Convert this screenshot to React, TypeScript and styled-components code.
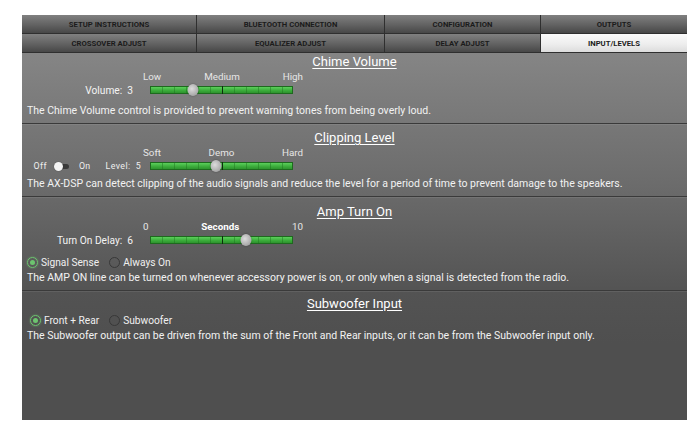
import styled, { createGlobalStyle } from "styled-components";

const GlobalStyle = createGlobalStyle`
  html, body {
    margin: 0;
    background: #ffffff;
  }
  body {
    font-family: Roboto, "Noto Sans", Arial, sans-serif;
  }
`;

const tabs = [
  ["SETUP INSTRUCTIONS", "BLUETOOTH CONNECTION", "CONFIGURATION", "OUTPUTS"],
  ["CROSSOVER ADJUST", "EQUALIZER ADJUST", "DELAY ADJUST", "INPUT/LEVELS"],
];

type SliderProps = {
  labels: string[];
  value: number;
  boldMiddle?: boolean;
};

function Slider({ labels, value, boldMiddle }: SliderProps) {
  return (
    <SliderGroup>
      <Scale>
        {labels.map((l, i) => (
          <ScaleLabel key={l} $bold={boldMiddle && i === 1}>
            {l}
          </ScaleLabel>
        ))}
      </Scale>
      <TrackWrap>
        <Track />
        <Thumb style={{ left: `${value}%` }} />
      </TrackWrap>
    </SliderGroup>
  );
}

function Radio({ label, checked }: { label: string; checked?: boolean }) {
  return (
    <RadioItem>
      <RadioDot $checked={checked} />
      {label}
    </RadioItem>
  );
}

export default function App() {
  return (
    <Page>
      <GlobalStyle />
      <Panel>
        <TabGrid>
          {tabs.flat().map((t) => (
            <Tab key={t} $active={t === "INPUT/LEVELS"}>
              {t}
            </Tab>
          ))}
        </TabGrid>

        <Content>
          <Section $top={2}>
            <Title>Chime Volume</Title>
            <ControlRow>
              <LeftCell $pad={10}>
                <Label>Volume:&nbsp; 3</Label>
              </LeftCell>
              <Slider labels={["Low", "Medium", "High"]} value={30} />
            </ControlRow>
            <Description $gap={8}>
              The Chime Volume control is provided to prevent warning tones from being overly loud.
            </Description>
          </Section>

          <Section $top={7}>
            <Title>Clipping Level</Title>
            <ControlRow>
              <LeftCell $pad={2}>
                <SmallLabel>Off</SmallLabel>
                <Switch />
                <SmallLabel>On</SmallLabel>
                <SmallLabel $wide>Level:&nbsp; 5</SmallLabel>
              </LeftCell>
              <Slider labels={["Soft", "Demo", "Hard"]} value={46} />
            </ControlRow>
            <Description $gap={5}>
              The AX-DSP can detect clipping of the audio signals and reduce the level for a period of time to prevent damage to the speakers.
            </Description>
          </Section>

          <Section $top={8}>
            <Title>Amp Turn On</Title>
            <ControlRow>
              <LeftCell $pad={10}>
                <Label>Turn On Delay:&nbsp; 6</Label>
              </LeftCell>
              <Slider labels={["0", "Seconds", "10"]} value={67} boldMiddle />
            </ControlRow>
            <RadioRow $gap={8}>
              <Radio label="Signal Sense" checked />
              <Radio label="Always On" />
            </RadioRow>
            <Description $gap={3}>
              The AMP ON line can be turned on whenever accessory power is on, or only when a signal is detected from the radio.
            </Description>
          </Section>

          <Section $top={6} $last>
            <Title>Subwoofer Input</Title>
            <RadioRow $gap={2} $indent={3}>
              <Radio label="Front + Rear" checked />
              <Radio label="Subwoofer" />
            </RadioRow>
            <Description $gap={3}>
              The Subwoofer output can be driven from the sum of the Front and Rear inputs, or it can be from the Subwoofer input only.
            </Description>
          </Section>
        </Content>
      </Panel>
    </Page>
  );
}

const Page = styled.div`
  padding: 15px 0 0 22px;
`;

const Panel = styled.div`
  width: 665px;
  height: 405px;
  display: flex;
  flex-direction: column;
  background: #4f4f4f;
`;

const TabGrid = styled.div`
  display: grid;
  grid-template-columns: 174px 187px 155px 1fr;
  grid-auto-rows: 18px;
  gap: 1px;
  background: #2f2f2f;
  border-bottom: 1px solid #2f2f2f;
`;

const Tab = styled.div<{ $active?: boolean }>`
  display: flex;
  align-items: center;
  justify-content: center;
  font-size: 7.7px;
  font-weight: 700;
  color: #1b1b1b;
  background: ${(p) =>
    p.$active
      ? "linear-gradient(#fbfbfb, #ececec 60%, #dcdcdc)"
      : "linear-gradient(#808080, #626262 55%, #474747)"};
`;

const Content = styled.div`
  flex: 1;
  background: linear-gradient(#858585 0, #6c6c6c 130px, #535353 240px, #4f4f4f 290px);
`;

const Section = styled.div<{ $top: number; $last?: boolean }>`
  padding: ${(p) => p.$top}px 0 6px 5px;
  display: flex;
  flex-direction: column;
  color: #f2f2f2;
  border-bottom: ${(p) => (p.$last ? "none" : "1px solid #3a3a3a")};
  box-shadow: ${(p) => (p.$last ? "none" : "0 1px 0 rgba(255,255,255,0.08)")};
`;

const Title = styled.div`
  align-self: center;
  margin-left: -5px;
  font-size: 13px;
  line-height: 14px;
  text-decoration: underline;
  text-underline-offset: 2px;
  color: #ffffff;
`;

const ControlRow = styled.div`
  display: grid;
  grid-template-columns: 116px 160px;
  align-items: end;
  margin-top: 2px;
`;

const LeftCell = styled.div<{ $pad: number }>`
  display: flex;
  align-items: center;
  justify-content: flex-end;
  height: 14px;
  padding-right: ${(p) => p.$pad}px;
`;

const Label = styled.span`
  font-size: 10.2px;
  color: #f4f4f4;
`;

const SmallLabel = styled.span<{ $wide?: boolean }>`
  font-size: 8.8px;
  letter-spacing: 0.4px;
  color: #eeeeee;
  margin-left: ${(p) => (p.$wide ? "15px" : "0")};
`;

const Switch = styled.span`
  position: relative;
  width: 15px;
  height: 9px;
  margin: 0 10px 0 7px;

  &::before {
    content: "";
    position: absolute;
    left: 3px;
    right: 0;
    top: 2px;
    height: 5px;
    border-radius: 3px;
    background: #3a3a3a;
  }

  &::after {
    content: "";
    position: absolute;
    left: 0;
    top: 0;
    width: 9px;
    height: 9px;
    border-radius: 50%;
    background: #f4f4f4;
    box-shadow: 0 0 1px rgba(0, 0, 0, 0.5);
  }
`;

const SliderGroup = styled.div`
  display: flex;
  flex-direction: column;
`;

const Scale = styled.div`
  display: flex;
  justify-content: space-between;
  height: 12px;
  line-height: 12px;
`;

const ScaleLabel = styled.span<{ $bold?: boolean }>`
  font-size: 9.8px;
  font-weight: ${(p) => (p.$bold ? 700 : 400)};
  color: ${(p) => (p.$bold ? "#ffffff" : "#e6e6e6")};
`;

const TrackWrap = styled.div`
  position: relative;
  height: 14px;
  margin: 0 10px 0 7px;
  display: flex;
  align-items: center;
`;

const Track = styled.div`
  position: relative;
  flex: 1;
  height: 6px;
  border: 1px solid #1d6a1d;
  background:
    repeating-linear-gradient(90deg, transparent 0 11px, rgba(30, 110, 30, 0.45) 11px 12px),
    linear-gradient(#5ccf5c, #3aab3a 60%, #2e932e);

  &::after {
    content: "";
    position: absolute;
    left: 50%;
    top: -1px;
    bottom: -1px;
    width: 1px;
    background: #0d2d0d;
  }
`;

const Thumb = styled.span`
  position: absolute;
  top: 50%;
  width: 11px;
  height: 12px;
  border-radius: 50%;
  transform: translate(-50%, -50%);
  background: radial-gradient(circle at 40% 40%, #dcdcdc, #a8a8a8 70%, #8a8a8a);
  box-shadow: 0 0 2px rgba(0, 0, 0, 0.35);
`;

const RadioRow = styled.div<{ $gap: number; $indent?: number }>`
  display: flex;
  gap: 10px;
  height: 14px;
  align-items: center;
  margin-top: ${(p) => p.$gap}px;
  padding-left: ${(p) => p.$indent ?? 0}px;
`;

const RadioItem = styled.span`
  display: inline-flex;
  align-items: center;
  gap: 3px;
  font-size: 10.2px;
  color: #f0f0f0;
`;

const RadioDot = styled.span<{ $checked?: boolean }>`
  position: relative;
  width: 9px;
  height: 9px;
  border-radius: 50%;
  border: 1.5px solid ${(p) => (p.$checked ? "#6cc56f" : "#383838")};
  box-shadow: ${(p) => (p.$checked ? "0 0 2px rgba(120, 220, 120, 0.6)" : "none")};

  &::after {
    content: "";
    display: ${(p) => (p.$checked ? "block" : "none")};
    position: absolute;
    inset: 2px;
    border-radius: 50%;
    background: #6cc56f;
  }
`;

const Description = styled.div<{ $gap: number }>`
  margin-top: ${(p) => p.$gap}px;
  font-size: 10.5px;
  line-height: 12px;
  color: #f2f2f2;
`;
